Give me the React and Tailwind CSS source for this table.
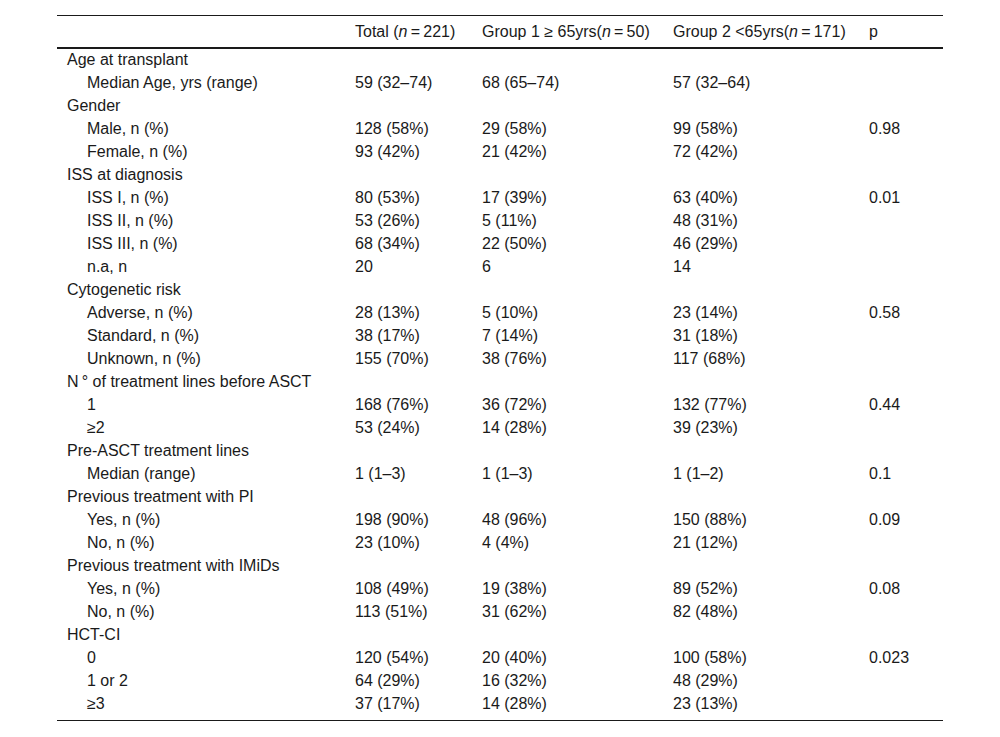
import React from "react";

const rows = [
    {label: "Age at transplant", head: true},
    {label: "Median Age, yrs (range)", v: ["59 (32–74)", "68 (65–74)", "57 (32–64)", ""]},
    {label: "Gender", head: true},
    {label: "Male, n (%)", v: ["128 (58%)", "29 (58%)", "99 (58%)", "0.98"]},
    {label: "Female, n (%)", v: ["93 (42%)", "21 (42%)", "72 (42%)", ""]},
    {label: "ISS at diagnosis", head: true},
    {label: "ISS I, n (%)", v: ["80 (53%)", "17 (39%)", "63 (40%)", "0.01"]},
    {label: "ISS II, n (%)", v: ["53 (26%)", "5 (11%)", "48 (31%)", ""]},
    {label: "ISS III, n (%)", v: ["68 (34%)", "22 (50%)", "46 (29%)", ""]},
    {label: "n.a, n", v: ["20", "6", "14", ""]},
    {label: "Cytogenetic risk", head: true},
    {label: "Adverse, n (%)", v: ["28 (13%)", "5 (10%)", "23 (14%)", "0.58"]},
    {label: "Standard, n (%)", v: ["38 (17%)", "7 (14%)", "31 (18%)", ""]},
    {label: "Unknown, n (%)", v: ["155 (70%)", "38 (76%)", "117 (68%)", ""]},
    {label: "N\u2009° of treatment lines before ASCT", head: true},
    {label: "1", v: ["168 (76%)", "36 (72%)", "132 (77%)", "0.44"]},
    {label: "≥2", v: ["53 (24%)", "14 (28%)", "39 (23%)", ""]},
    {label: "Pre-ASCT treatment lines", head: true},
    {label: "Median (range)", v: ["1 (1–3)", "1 (1–3)", "1 (1–2)", "0.1"]},
    {label: "Previous treatment with PI", head: true},
    {label: "Yes, n (%)", v: ["198 (90%)", "48 (96%)", "150 (88%)", "0.09"]},
    {label: "No, n (%)", v: ["23 (10%)", "4 (4%)", "21 (12%)", ""]},
    {label: "Previous treatment with IMiDs", head: true},
    {label: "Yes, n (%)", v: ["108 (49%)", "19 (38%)", "89 (52%)", "0.08"]},
    {label: "No, n (%)", v: ["113 (51%)", "31 (62%)", "82 (48%)", ""]},
    {label: "HCT-CI", head: true},
    {label: "0", v: ["120 (54%)", "20 (40%)", "100 (58%)", "0.023"]},
    {label: "1 or 2", v: ["64 (29%)", "16 (32%)", "48 (29%)", ""]},
    {label: "≥3", v: ["37 (17%)", "14 (28%)", "23 (13%)", ""]},
];

const N = () => <i>n</i>;

export default function App() {
    return (
        <div className="w-[1000px] h-[737px] bg-white pt-[15px] pl-[57px] text-[#1a1a1a] text-[16px] font-['Liberation_Sans',Arial,sans-serif]">
            <table className="table-fixed w-[886px] border-collapse">
                <colgroup>
                    <col className="w-[288px]"/>
                    <col className="w-[127px]"/>
                    <col className="w-[191px]"/>
                    <col className="w-[196px]"/>
                    <col className="w-[84px]"/>
                </colgroup>
                <thead>
                    <tr className="h-[32px] border-t border-[#1a1a1a] border-b-2 leading-[18px]">
                        <th></th>
                        <th className="text-left font-normal pl-[10px] pt-[2px] whitespace-nowrap">Total (<N/>{"\u2009=\u2009"}221)</th>
                        <th className="text-left font-normal pl-[10px] pt-[2px] whitespace-nowrap">Group 1 ≥ 65yrs(<N/>{"\u2009=\u2009"}50)</th>
                        <th className="text-left font-normal pl-[10px] pt-[2px] whitespace-nowrap">Group 2 &lt;65yrs(<N/>{"\u2009=\u2009"}171)</th>
                        <th className="text-left font-normal pl-[10px] pt-[2px]">p</th>
                    </tr>
                </thead>
                <tbody className="border-b border-[#1a1a1a]">
                    {rows.map((r, i) => (
                        <tr key={i} className="h-[23px] leading-[18px]">
                            <td className={r.head ? "pl-[10px] pt-[1px] whitespace-nowrap" : "pl-[30px] pt-[1px] whitespace-nowrap"}>{r.label}</td>
                            {(r.v || ["", "", "", ""]).map((c, j) => (
                                <td key={j} className="pl-[10px] pt-[1px] whitespace-nowrap">{c}</td>
                            ))}
                        </tr>
                    ))}
                    <tr className="h-[6px]"><td colSpan={5}></td></tr>
                </tbody>
            </table>
        </div>
    );
}
